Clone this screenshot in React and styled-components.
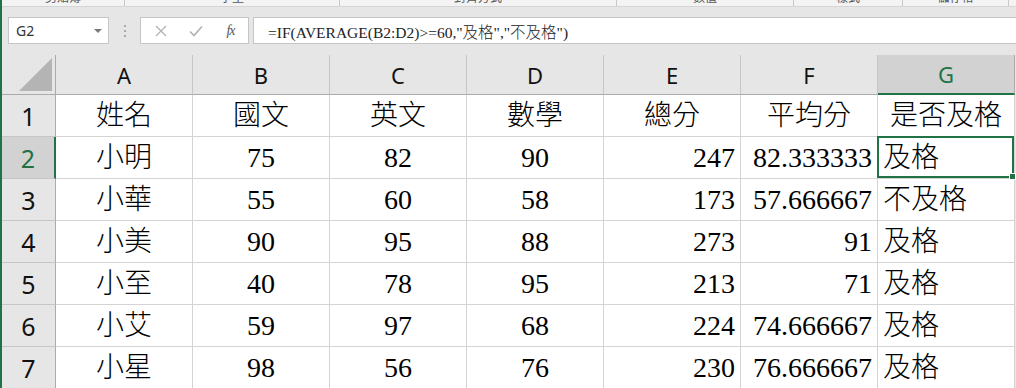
import React from 'react'
import styled, { createGlobalStyle } from 'styled-components'

const GlobalStyle = createGlobalStyle`
  html, body {
    margin: 0;
    padding: 0;
    background: #ffffff;
  }
  body {
    overflow: hidden;
  }
`

const GREEN = '#217346'

const Window = styled.div`
  width: 1016px;
  height: 388px;
  overflow: hidden;
  box-sizing: border-box;
  border-left: 2px solid ${GREEN};
  background: #e6e6e6;
  display: flex;
  flex-direction: column;
`

const Ribbon = styled.div`
  height: 6px;
  flex: none;
  display: flex;
  background: #f3f3f3;
  border-bottom: 1px solid #d5d5d5;
  overflow: hidden;
`

const RibbonGroup = styled.div`
  width: ${(p) => p.$w}px;
  flex: none;
  box-sizing: border-box;
  border-right: 1px solid #c8c8c8;
  display: flex;
  justify-content: center;
  align-items: flex-end;
  padding-bottom: 3px;
  overflow: hidden;
`

const RibbonLabel = styled.span`
  font-family: 'Noto Sans CJK TC', sans-serif;
  font-size: 12px;
  line-height: 12px;
  color: #555;
  white-space: nowrap;
`

const FormulaBar = styled.div`
  flex: none;
  height: 27px;
  display: flex;
  margin: 10px 0 11px;
  padding-left: 6px;
`

const NameBox = styled.div`
  width: 101px;
  box-sizing: border-box;
  background: #ffffff;
  border: 1px solid #c6c6c6;
  display: flex;
  align-items: center;
  justify-content: space-between;
  padding: 0 6px 0 7px;
  font-family: 'Noto Sans', sans-serif;
  font-size: 14px;
  color: #333;
`

const DropArrow = styled.span`
  width: 0;
  height: 0;
  border-left: 4px solid transparent;
  border-right: 4px solid transparent;
  border-top: 4px solid #7a7a7a;
`

const Grip = styled.div`
  width: 31px;
  display: flex;
  flex-direction: column;
  align-items: center;
  justify-content: center;
  gap: 3px;

  span {
    width: 2px;
    height: 2px;
    background: #a9a9a9;
  }
`

const FxBox = styled.div`
  width: 109px;
  box-sizing: border-box;
  background: #ffffff;
  border: 1px solid #c6c6c6;
  display: flex;
  align-items: center;
  padding-left: 2px;
`

const FxButton = styled.span`
  width: 36px;
  display: flex;
  justify-content: center;
  align-items: center;
  color: ${(p) => (p.$active ? '#555' : '#b2b2b2')};
`

const FxLabel = styled.span`
  font-family: 'Liberation Serif', serif;
  font-style: italic;
  font-size: 14px;
  color: #555;
  letter-spacing: -1px;
`

const FormulaInput = styled.div`
  flex: 1;
  margin-left: 4px;
  box-sizing: border-box;
  background: #ffffff;
  border: 1px solid #c6c6c6;
  border-right: none;
  display: flex;
  align-items: center;
  padding-left: 14px;
  font-family: 'Liberation Serif', 'Noto Sans CJK TC', serif;
  font-size: 15.5px;
  font-weight: 300;
  color: #222;
  white-space: nowrap;
`

const Sheet = styled.div`
  display: grid;
  grid-template-columns: 54px repeat(7, 137px);
  grid-template-rows: 40px;
  grid-auto-rows: 42px;
`

const Corner = styled.div`
  position: relative;
  background: #e6e6e6;
  border-right: 1px solid #ababab;
  border-bottom: 1px solid #ababab;

  &::after {
    content: '';
    position: absolute;
    right: 3px;
    bottom: 3px;
    width: 33px;
    height: 33px;
    background: #b4b4b4;
    clip-path: polygon(100% 0, 100% 100%, 0 100%);
  }
`

const ColHeader = styled.div`
  box-sizing: border-box;
  background: ${(p) => (p.$selected ? '#d2d2d2' : '#e6e6e6')};
  border-right: 1px solid ${(p) => (p.$selected ? '#ababab' : '#c6c6c6')};
  border-bottom: ${(p) => (p.$selected ? `2px solid ${GREEN}` : '1px solid #ababab')};
  color: ${(p) => (p.$selected ? GREEN : '#111')};
  display: flex;
  align-items: center;
  justify-content: center;
  font-family: 'Noto Sans', sans-serif;
  font-size: 22px;
`

const RowHeader = styled.div`
  box-sizing: border-box;
  background: ${(p) => (p.$selected ? '#d2d2d2' : '#e6e6e6')};
  border-right: ${(p) => (p.$selected ? `2px solid ${GREEN}` : '1px solid #ababab')};
  border-bottom: 1px solid #c6c6c6;
  color: ${(p) => (p.$selected ? GREEN : '#111')};
  display: flex;
  align-items: center;
  justify-content: center;
  font-family: 'Noto Sans', sans-serif;
  font-size: 25px;
`

const Cell = styled.div`
  position: relative;
  box-sizing: border-box;
  background: #ffffff;
  border-right: 1px solid #d4d4d4;
  border-bottom: 1px solid #d4d4d4;
  display: flex;
  align-items: flex-end;
  justify-content: ${(p) =>
    p.$align === 'right' ? 'flex-end' : p.$align === 'left' ? 'flex-start' : 'center'};
  padding: 0 5px 6px 5px;
  font-family: 'Liberation Serif', 'Noto Sans CJK TC', serif;
  font-size: 28px;
  font-weight: 300;
  line-height: 1;
  color: #000;
  white-space: nowrap;
`

const Selection = styled.div`
  position: absolute;
  top: -1px;
  left: -1px;
  right: 0;
  bottom: 0;
  border: 2px solid ${GREEN};
  z-index: 1;
  pointer-events: none;
`

const FillHandle = styled.span`
  position: absolute;
  right: -4px;
  bottom: -4px;
  width: 5px;
  height: 5px;
  background: ${GREEN};
  border: 1px solid #ffffff;
`

const ribbonGroups = [
  { w: 123, label: '剪貼簿' },
  { w: 215, label: '字型' },
  { w: 277, label: '對齊方式' },
  { w: 177, label: '數值' },
  { w: 109, label: '樣式' },
  { w: 106, label: '儲存格' },
  { w: 80, label: '編輯' },
]

const columns = ['A', 'B', 'C', 'D', 'E', 'F', 'G']

const rows = [
  ['姓名', '國文', '英文', '數學', '總分', '平均分', '是否及格'],
  ['小明', '75', '82', '90', '247', '82.333333', '及格'],
  ['小華', '55', '60', '58', '173', '57.666667', '不及格'],
  ['小美', '90', '95', '88', '273', '91', '及格'],
  ['小至', '40', '78', '95', '213', '71', '及格'],
  ['小艾', '59', '97', '68', '224', '74.666667', '及格'],
  ['小星', '98', '56', '76', '230', '76.666667', '及格'],
]

const dataAlign = ['center', 'center', 'center', 'center', 'right', 'right', 'left']

function App() {
  return (
    <>
      <GlobalStyle />
      <Window>
        <Ribbon>
          {ribbonGroups.map((g) => (
            <RibbonGroup key={g.label} $w={g.w}>
              <RibbonLabel>{g.label}</RibbonLabel>
            </RibbonGroup>
          ))}
        </Ribbon>

        <FormulaBar>
          <NameBox>
            G2
            <DropArrow />
          </NameBox>
          <Grip>
            <span />
            <span />
            <span />
          </Grip>
          <FxBox>
            <FxButton>
              <svg width="12" height="12" viewBox="0 0 12 12">
                <path d="M1 1 L11 11 M11 1 L1 11" stroke="currentColor" strokeWidth="1.3" />
              </svg>
            </FxButton>
            <FxButton>
              <svg width="14" height="12" viewBox="0 0 14 12">
                <path d="M1 6.5 L5 10.5 L13 1.5" fill="none" stroke="currentColor" strokeWidth="1.6" />
              </svg>
            </FxButton>
            <FxButton $active>
              <FxLabel>fx</FxLabel>
            </FxButton>
          </FxBox>
          <FormulaInput>=IF(AVERAGE(B2:D2)&gt;=60,"及格","不及格")</FormulaInput>
        </FormulaBar>

        <Sheet>
          <Corner />
          {columns.map((c) => (
            <ColHeader key={c} $selected={c === 'G'}>
              {c}
            </ColHeader>
          ))}
          {rows.map((row, r) => (
            <React.Fragment key={r}>
              <RowHeader $selected={r === 1}>{r + 1}</RowHeader>
              {row.map((v, c) => (
                <Cell key={c} $align={r === 0 ? 'center' : dataAlign[c]}>
                  {v}
                  {r === 1 && c === 6 && (
                    <Selection>
                      <FillHandle />
                    </Selection>
                  )}
                </Cell>
              ))}
            </React.Fragment>
          ))}
        </Sheet>
      </Window>
    </>
  )
}

export default App
